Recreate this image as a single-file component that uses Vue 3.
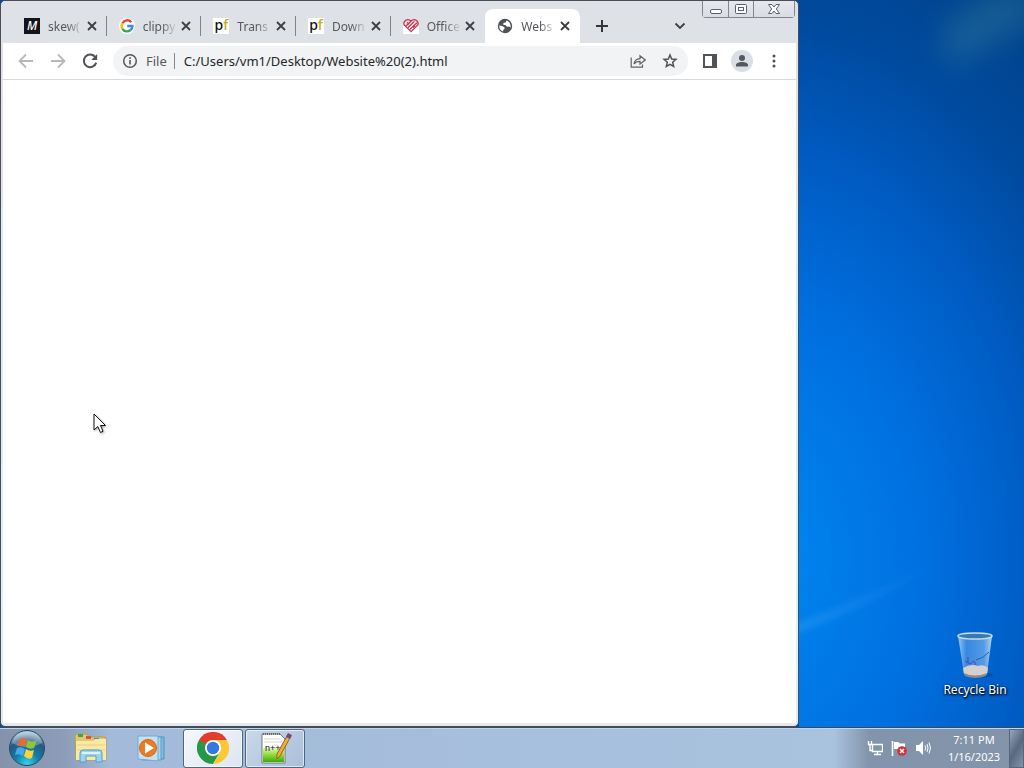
<script setup>
import {ref} from "vue"

const tabs = ref([
  { id: 1, title: "skew(", icon: "mdn" },
  { id: 2, title: "clippy", icon: "google" },
  { id: 3, title: "Trans", icon: "pf" },
  { id: 4, title: "Down", icon: "pf" },
  { id: 5, title: "Office", icon: "heart" },
  { id: 6, title: "Webs", icon: "globe" }
])
const activeTab = ref(6)
const url = ref("C:/Users/vm1/Desktop/Website%20(2).html")

const closeTab = (id) => {
  tabs.value = tabs.value.filter(tab => tab.id !== id)
}
</script>

<template>
  <main class="screen">
    <div class="desktop">
      <section class="window">
        <header class="tab-strip">
          <div class="tabs">
            <div v-for="tab in tabs" :key="tab.id" class="tab" :class="{active: tab.id === activeTab}" @click="activeTab = tab.id">
              <span v-if="tab.icon === 'mdn'" class="favicon mdn">M</span>
              <span v-else-if="tab.icon === 'pf'" class="favicon pf"><span>p</span><b>f</b></span>
              <svg v-else-if="tab.icon === 'google'" class="favicon white" viewBox="0 0 16 16" fill="none" stroke-width="2.4">
                <path d="M12.3 4.2A5.4 5.4 0 0 0 3.4 5.2" stroke="#ea4335"/>
                <path d="M3.4 5.2A5.4 5.4 0 0 0 3.4 10.8" stroke="#fbbc05"/>
                <path d="M3.4 10.8A5.4 5.4 0 0 0 11.6 12" stroke="#34a853"/>
                <path d="M11.6 12A5.2 5.2 0 0 0 13.4 8H8.2" stroke="#4285f4"/>
              </svg>
              <svg v-else-if="tab.icon === 'heart'" class="favicon heart" viewBox="0 0 16 16" fill="none" stroke="#cf3048" stroke-width="1.2">
                <path d="M8 13.6L1.400 7.200C-.6 3.600 4.200-.6 8 3C11.800-.6 16.600 3.600 14.600 7.200Z"/>
                <path d="M3 8L8 3.200M4.800 9.800L11.400 3.400M6.600 11.600L14 4.800M4 4.400L6 6.200M10 9.600L12 8"/>
              </svg>
              <svg v-else class="favicon" viewBox="0 0 16 16">
                <circle cx="8" cy="8" r="7.2" fill="#505357"/>
                <path d="M9.600 2.600L8.600 4.600L6.400 5L6.200 6.800L8.800 7.200L10 8.800L12 8.600L13.800 9.400C13.600 6 12.600 3.600 9.600 2.600ZM2.300 7.400L5 8L7.400 9.200L7.600 10.800L6.400 11.800L6 13.600C3.400 12.600 2 10.200 2.300 7.400Z" fill="#fff"/>
              </svg>
              <span class="tab-title">{{ tab.title }}</span>
              <button class="tab-close" aria-label="Close tab" @click.stop="closeTab(tab.id)">
                <svg width="16" height="16" viewBox="0 0 16 16"><path d="M4 4L12 12M12 4L4 12" stroke="#3c4043" stroke-width="1.8"/></svg>
              </button>
            </div>
          </div>
          <button class="strip-button new-tab" aria-label="New tab">
            <svg width="16" height="16" viewBox="0 0 16 16"><path d="M8 2V14M2 8H14" stroke="#33373b" stroke-width="2"/></svg>
          </button>
          <button class="strip-button search-tabs" aria-label="Search tabs">
            <svg width="16" height="16" viewBox="0 0 16 16" fill="none"><path d="M3.5 5.5L8 10L12.500 5.5" stroke="#3c4043" stroke-width="1.8"/></svg>
          </button>
          <div class="controls">
            <button aria-label="Minimize">
              <svg width="24" height="16" viewBox="0 0 24 16"><rect x="6.500" y="8.500" width="11" height="4" rx="1.500" fill="#fff" stroke="#5b5f6b"/></svg>
            </button>
            <button aria-label="Maximize">
              <svg width="24" height="16" viewBox="0 0 24 16" fill="#fff" stroke="#5b5f6b"><rect x="6.500" y="3.500" width="11" height="9" rx="1"/><rect x="9.500" y="6.500" width="5" height="3"/></svg>
            </button>
            <button class="wide" aria-label="Close">
              <svg width="24" height="16" viewBox="0 0 24 16"><path d="M6.500 3.500H10L12 6L14 3.500H17.500L14.300 8L17.500 12.500H14L12 10L10 12.500H6.500L9.700 8Z" fill="#fff" stroke="#5b5f6b"/></svg>
            </button>
          </div>
        </header>

        <div class="toolbar">
          <button class="tool" aria-label="Back">
            <svg width="20" height="20" viewBox="0 0 20 20" fill="none" stroke="#b7b9bc" stroke-width="1.8"><path d="M17 10H4M10 3.500L3.500 10L10 16.500"/></svg>
          </button>
          <button class="tool" aria-label="Forward">
            <svg width="20" height="20" viewBox="0 0 20 20" fill="none" stroke="#b7b9bc" stroke-width="1.8"><path d="M3 10H16M10 3.500L16.500 10L10 16.500"/></svg>
          </button>
          <button class="tool" aria-label="Reload">
            <svg width="20" height="20" viewBox="0 0 20 20"><path d="M15.300 6.200A6.300 6.300 0 1 0 16.200 11.600" fill="none" stroke="#505357" stroke-width="2"/><path d="M17.200 3V9H11.200Z" fill="#505357"/></svg>
          </button>
          <div class="omnibox">
            <svg width="16" height="16" viewBox="0 0 16 16"><circle cx="8" cy="8" r="6.300" fill="none" stroke="#55585c" stroke-width="1.500"/><path d="M8 7V11.500M8 4.300V6" stroke="#55585c" stroke-width="1.600"/></svg>
            <label for="address">File</label>
            <input id="address" v-model="url" type="text" spellcheck="false">
            <button class="tool" aria-label="Share">
              <svg width="16" height="16" viewBox="0 0 16 16" fill="none" stroke="#5f6368" stroke-width="1.200"><path d="M1.200 4.500V14.200H12.500V11.500"/><path d="M4 11C4.500 7.500 6.500 5.800 10 5.600V2.800L15.200 7L10 11V8.300C7.500 8.300 5.500 9 4 11Z"/></svg>
            </button>
            <button class="tool" aria-label="Bookmark">
              <svg width="16" height="16" viewBox="0 0 16 16" fill="none" stroke="#505357" stroke-width="1.500"><path d="M8 2L9.700 6L14 6.400L10.700 9.300L11.700 13.500L8 11.300L4.300 13.500L5.300 9.300L2 6.400L6.300 6Z"/></svg>
            </button>
          </div>
          <button class="tool" aria-label="Side panel">
            <svg width="16" height="16" viewBox="0 0 16 16"><path d="M1 1H15V15H1ZM3 3V13H10V3Z" fill="#505357" fill-rule="evenodd"/></svg>
          </button>
          <button class="tool" aria-label="Profile">
            <svg width="22" height="22" viewBox="0 0 22 22"><circle cx="11" cy="11" r="11" fill="#dadfe5"/><circle cx="11" cy="8" r="3" fill="#505860"/><path d="M5 16.500V15C5 13 8 12 11 12S17 13 17 15V16.500Z" fill="#505860"/></svg>
          </button>
          <button class="tool" aria-label="Menu">
            <svg width="16" height="16" viewBox="0 0 16 16" fill="#505357"><circle cx="8" cy="3" r="1.500"/><circle cx="8" cy="8" r="1.500"/><circle cx="8" cy="13" r="1.500"/></svg>
          </button>
        </div>
        <div class="page"></div>
      </section>

      <div class="icons">
        <svg class="rays" viewBox="0 0 225 728" preserveAspectRatio="none">
          <defs>
            <linearGradient id="ray" x1="0" x2="1"><stop offset="0" stop-color="#48b0f8" stop-opacity=".35"/><stop offset="1" stop-color="#2a8cf0" stop-opacity="0"/></linearGradient>
            <filter id="soft" x="-20%" y="-40%" width="140%" height="180%"><feGaussianBlur stdDeviation="3"/></filter>
            <filter id="softer" x="-40%" y="-80%" width="180%" height="260%"><feGaussianBlur stdDeviation="14"/></filter>
          </defs>
          <path d="M-10 628Q60 600 150 556Q90 602 -10 636Z" fill="url(#ray)" filter="url(#soft)"/>
          <path d="M140 30L190 -10H240V20L150 70Z" fill="#4590a0" opacity=".3" filter="url(#softer)"/>
        </svg>
        <button class="shortcut">
          <svg width="48" height="48" viewBox="0 0 48 48">
            <defs>
              <linearGradient id="bin" x1="0" x2="1"><stop offset="0" stop-color="#b9d8f2" stop-opacity=".85"/><stop offset=".25" stop-color="#5ca0e8" stop-opacity=".6"/><stop offset=".75" stop-color="#80b8ee" stop-opacity=".65"/><stop offset="1" stop-color="#c7e0f2" stop-opacity=".9"/></linearGradient>
            </defs>
            <ellipse cx="28" cy="44" rx="14" ry="3" fill="#003b85" opacity=".4"/>
            <path d="M7 5H41L36 43Q24 49 13 43Z" fill="url(#bin)"/>
            <path d="M12 37Q20 32 27 35Q33 33 37 37L36 43Q24 49 13 43Z" fill="#d5d0d0"/>
            <path d="M13 42Q24 47 36 42L35 45Q24 49 14 45Z" fill="#8e8987"/>
            <path d="M14 30L19 33L23 30L25 34M17 26V32" stroke="#5547ad" fill="none"/>
            <path d="M25 29Q33 27 38 21" stroke="#2360b0" fill="none"/>
            <ellipse cx="24" cy="5" rx="17" ry="3" fill="#3979ad" stroke="#c4dce4" stroke-width="1.500"/>
          </svg>
          <span>Recycle Bin</span>
        </button>
      </div>

      <svg class="cursor" width="14" height="21" viewBox="0 0 14 21"><path d="M1 1V17L4.800 13.500L7.500 19.500L10 18.300L7.500 12.500H12.500Z" fill="#fff" stroke="#111"/></svg>
    </div>

    <footer class="taskbar">
      <button class="start" aria-label="Start">
        <svg width="38" height="38" viewBox="0 0 38 38">
          <defs>
            <radialGradient id="orb" cx=".5" cy=".95" r=".9"><stop offset="0" stop-color="#35d5ef"/><stop offset=".4" stop-color="#127ba8"/><stop offset=".75" stop-color="#27587f"/><stop offset="1" stop-color="#a8c5d8"/></radialGradient>
          </defs>
          <circle cx="19" cy="19" r="17.500" fill="url(#orb)" stroke="#264b66"/>
          <path d="M4 14Q7 3 19 3T34 14Q19 22 4 14Z" fill="#fff" opacity=".28"/>
          <path d="M12 10Q16 8 19 11L17 18Q14 15 9 17Z" fill="#ed6931"/>
          <path d="M20 11Q24 14 29 11L26 19Q22 21 18 18Z" fill="#8cc63f"/>
          <path d="M9 19Q13 17 17 20L15 27Q11 24 7 26Z" fill="#48a9e8"/>
          <path d="M18 20Q22 23 26 21L24 29Q20 31 16 27Z" fill="#fcd23c"/>
        </svg>
      </button>
      <button class="task" aria-label="Windows Explorer">
        <svg width="34" height="34" viewBox="0 0 34 34">
          <path d="M1 5Q1 3 3 3H13L15 6H30Q32 6 32 8V29H2Z" fill="#e5c66c" stroke="#ba9850"/>
          <path d="M4 3H9V6H4Z" fill="#38a64b"/><path d="M12 5H17V8H12Z" fill="#d55338"/><path d="M20 7H25V10H20Z" fill="#4a91cc"/>
          <path d="M2 10H19L21 8H32V29H2Z" fill="#f8e9a5"/>
          <path d="M3 14H31M3 19H31" stroke="#e8cf7e"/>
          <path d="M6 31V22Q6 19 9 19H25Q28 19 28 22V31H22V25H12V31Z" fill="#9bd4ef" stroke="#569dc8"/>
          <path d="M8 22H26" stroke="#d9f3fc" stroke-width="2"/>
        </svg>
      </button>
      <button class="task" aria-label="Media Player">
        <svg width="30" height="30" viewBox="0 0 30 30">
          <path d="M9 4H28V26H9Z" fill="#83bbdf" stroke="#558fb9"/><path d="M6 4H25V27H6Z" fill="#a8d3ec" stroke="#5c9fcb"/>
          <path d="M2 3H22V28L2 26Z" fill="#c1e2f4" stroke="#75abcd"/>
          <circle cx="12" cy="15" r="8.500" fill="#ef7b20" stroke="#d56613"/><path d="M9 9.500L18 15L9 20.500Z" fill="#fff"/>
        </svg>
      </button>
      <button class="task open current" aria-label="Google Chrome">
        <svg width="32" height="32" viewBox="0 0 32 32">
          <path d="M16 16L2.100 8A16 16 0 0 1 29.900 8Z" fill="#e33b2e"/>
          <path d="M16 16L2.100 8A16 16 0 0 0 16 32L23 20Z" fill="#279847"/>
          <path d="M16 8H29.900A16 16 0 0 1 16 32L23 20Z" fill="#fcc934"/>
          <path d="M2.100 8H16V16H9Z" fill="#e33b2e"/><path d="M2.100 8L9.100 20L16 16Z" fill="#279847"/>
          <circle cx="16" cy="16" r="8" fill="#fff"/><circle cx="16" cy="16" r="6.200" fill="#3478e4"/>
        </svg>
      </button>
      <button class="task open" aria-label="Notepad++">
        <svg width="34" height="34" viewBox="0 0 34 34">
          <defs><linearGradient id="pad" x1="0" y1="0" x2="0" y2="1"><stop offset="0" stop-color="#e8f8bc"/><stop offset=".5" stop-color="#8cdb34"/><stop offset="1" stop-color="#3da813"/></linearGradient></defs>
          <path d="M4 3H22L27 8V32H4Z" fill="#fff" stroke="#6d7c70"/>
          <path d="M5 3H22" stroke="#666" stroke-width="2" stroke-dasharray="1 1"/>
          <path d="M6 8H22M6 11H24" stroke="#d5d5d5"/>
          <path d="M5 17H26V31H5Z" fill="url(#pad)"/>
          <path d="M30 3L33 5L22 25L19 28L19 23Z" fill="#f0ae36" stroke="#9c6224"/>
          <path d="M30 2L34 4L32 8L28 6Z" fill="#685080"/>
          <text x="7" y="20" font-size="9" font-family="Liberation Sans, sans-serif" fill="#111">n++</text>
        </svg>
      </button>
      <div class="tray">
        <svg width="16" height="16" viewBox="0 0 16 16" fill="none" stroke="#fff"><path d="M5.500 4.500H15.500V11.500H5.500ZM7 14.500H14M10.500 12V14" stroke-width="1.400"/><path d="M1.500 1V4.500H4.500V1M3 4.500V10.500H5.500" stroke-width="1.400"/></svg>
        <svg width="16" height="16" viewBox="0 0 16 16"><path d="M1.500 1V16" stroke="#fff" stroke-width="1.600"/><path d="M3 2H7L9 3.500H14V10H9L7 9H3Z" fill="#fff"/><circle cx="11" cy="11" r="4.800" fill="#d92c36"/><path d="M9 9L13 13M13 9L9 13" stroke="#fff" stroke-width="1.500"/></svg>
        <svg width="16" height="16" viewBox="0 0 16 16" fill="none"><path d="M1 5H4L8 1V15L4 11H1Z" fill="#fff"/><path d="M10 5.500Q11.500 8 10 10.500M12 4Q14 8 12 12M14 2.500Q17 8 14 13.500" stroke="#fff"/></svg>
      </div>
      <div class="clock">
        <time>7:11 PM</time>
        <time>1/16/2023</time>
      </div>
      <button class="show-desktop" aria-label="Show desktop"></button>
    </footer>
  </main>
</template>

<style>
body{
  margin: 0;
  overflow: hidden;
}
</style>

<style scoped>
*{
  box-sizing: border-box;
}
button{
  border: none;
  padding: 0;
  background: none;
  font: inherit;
  color: inherit;
}
svg{
  display: block;
  flex-shrink: 0;
}
.screen{
  height: 100vh;
  display: flex;
  flex-direction: column;
  font-family: "Noto Sans", "Open Sans", sans-serif;
  font-size: 12px;
}
.desktop{
  flex: 1;
  min-height: 0;
  display: grid;
  grid-template-columns: minmax(0, 1fr) 225px;
  position: relative;
  background: #004a9c;
}
.window{
  display: flex;
  flex-direction: column;
  border: 1px solid #4a4d58;
  border-radius: 5px;
  padding: 0 2px 3px;
  background: linear-gradient(#dee1e6 0, #e2e4ea 190px, #d5eef5 220px, #d8f2f8 90%, #e6e9ec 100%);
  overflow: hidden;
}
.tab-strip{
  display: flex;
  height: 42px;
  padding-left: 9px;
  background: #dee1e6;
}
.tabs{
  display: flex;
  align-items: flex-end;
  flex: 0 1 568px;
  min-width: 0;
}
.tab{
  flex: 1;
  min-width: 0;
  height: 34px;
  display: flex;
  align-items: center;
  padding: 0 7px 0 12px;
  position: relative;
  color: #55585d;
}
.tab:not(.active):not(:nth-last-child(2))::after{
  content: "";
  position: absolute;
  right: 0;
  top: 7px;
  width: 1px;
  height: 20px;
  background: #808388;
}
.tab.active{
  background: #fff;
  border-radius: 8px 8px 0 0;
}
.favicon{
  width: 16px;
  height: 16px;
  flex-shrink: 0;
}
.white{
  background: #fff;
  border-radius: 8px;
}
.heart{
  background: linear-gradient(transparent 50%, #fff 50%);
}
.mdn{
  background: #15141a;
  color: #fff;
  font-size: 12px;
  line-height: 16px;
  font-style: italic;
  font-weight: 500;
  text-align: center;
}
.pf{
  display: flex;
  justify-content: center;
  background: #fff;
  color: #111;
  font-size: 14px;
  line-height: 14px;
  font-weight: 500;
}
.pf b{
  color: #c3a91c;
  font-weight: 500;
}
.tab-title{
  flex: 1;
  min-width: 0;
  margin: 0 2px 0 8px;
  white-space: nowrap;
  mask-image: linear-gradient(90deg, #000 55%, rgba(0, 0, 0, 0.1));
}
.strip-button{
  width: 28px;
  display: flex;
  align-items: center;
  justify-content: center;
  padding-top: 8px;
}
.new-tab{
  margin-left: 8px;
}
.search-tabs{
  margin-left: auto;
}
.controls{
  display: flex;
  align-self: flex-start;
  margin: 0 1px 0 8px;
  border: 1px solid #84868f;
  border-top: none;
  border-radius: 0 0 4px 4px;
}
.controls button{
  display: flex;
  justify-content: center;
  width: 25px;
  height: 16px;
  background: linear-gradient(#e6e8ed, #d9dce3);
}
.controls button + button{
  border-left: 1px solid #84868f;
}
.controls .wide{
  width: 41px;
}
.toolbar{
  display: flex;
  align-items: center;
  height: 37px;
  padding: 0 6px 0 7px;
  background: #fff;
  border-bottom: 1px solid #d8dadd;
}
.tool{
  width: 32px;
  height: 32px;
  display: flex;
  align-items: center;
  justify-content: center;
}
.omnibox{
  flex: 1;
  min-width: 0;
  display: flex;
  align-items: center;
  height: 30px;
  margin: 0 6px 0 7px;
  padding: 0 2px 0 9px;
  border-radius: 15px;
  background: #f1f3f4;
}
.omnibox label{
  margin-left: 8px;
  padding-right: 7px;
  border-right: 1px solid #85888c;
  font-size: 13px;
  line-height: 16px;
  color: #55585d;
}
.omnibox input{
  flex: 1;
  min-width: 0;
  border: none;
  outline: none;
  padding: 0 0 0 9px;
  background: none;
  font-family: inherit;
  font-size: 13px;
  color: #24272b;
}
.page{
  flex: 1;
  background: #fff;
}
.icons{
  position: relative;
  display: flex;
  align-items: flex-end;
  justify-content: flex-end;
  padding: 0 8px 28px 0;
  background: radial-gradient(ellipse 440px 620px at -50px 560px, #0088f2, #0070e0 40%, #005cc4 65%, #004a9e 88%, #004084 115%);
}
.rays{
  position: absolute;
  inset: 0;
  width: 100%;
  height: 100%;
}
.shortcut{
  position: relative;
  width: 82px;
  display: flex;
  flex-direction: column;
  align-items: center;
  gap: 2px;
  color: #fff;
  line-height: 18px;
  text-shadow: 1px 1px 2px #000, 0 1px 3px #001;
}
.cursor{
  position: absolute;
  left: 93px;
  top: 413px;
  filter: drop-shadow(1px 1px 1px rgba(0, 0, 0, 0.35));
}
.taskbar{
  display: flex;
  align-items: center;
  height: 41px;
  border-top: 1px solid #3d4a5c;
  box-shadow: inset 0 1px 0 #bcd6ec;
  background: linear-gradient(90deg, #8493ab 0, #8c9db9 65px, #a3bada 110px, #a7c0dd 600px, #a9c2de calc(100% - 190px), #8294ab calc(100% - 155px), #8394aa 100%);
}
.start{
  margin: 0 15px 0 8px;
}
.task{
  width: 60px;
  height: 39px;
  display: flex;
  align-items: center;
  justify-content: center;
}
.task.open{
  border: 1px solid #52647e;
  border-radius: 3px;
  background: linear-gradient(135deg, #cad8ea, #a9bed9);
  box-shadow: inset 0 0 0 1px rgba(255, 255, 255, 0.6);
  margin-left: 2px;
}
.task.current{
  background: linear-gradient(135deg, #f5f8fc, #dce5f1);
}
.tray{
  display: flex;
  gap: 8px;
  margin: 0 8px 0 auto;
}
.clock{
  width: 70px;
  display: flex;
  flex-direction: column;
  text-align: center;
  font-size: 11px;
  line-height: 17px;
  color: #fff;
}
.show-desktop{
  width: 15px;
  height: 39px;
  border: 1px solid #55677f;
  background: linear-gradient(120deg, #97a6b8, #58697f 50%, #8495ab);
}
</style>
